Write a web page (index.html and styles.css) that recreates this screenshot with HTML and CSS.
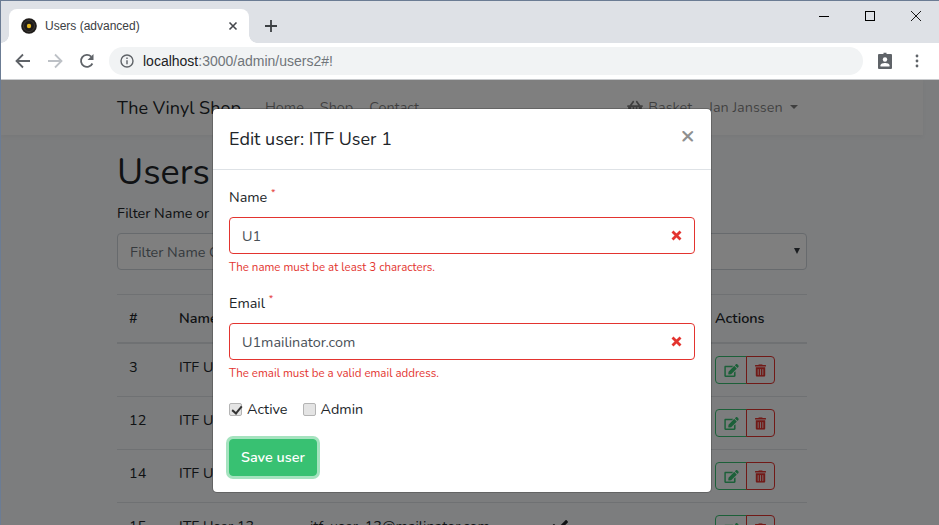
FILE: index.html
```html
<!DOCTYPE html>
<html lang="en">
<head>
    <meta charset="UTF-8">
    <meta name="viewport" content="width=device-width, initial-scale=1.0">
    <title>Users (advanced)</title>
    <link rel="stylesheet" href="styles.css">
</head>
<body>

<div class="tabstrip">
    <div class="tab">
        <svg class="favicon" width="16" height="16" viewBox="0 0 16 16"><circle cx="8" cy="8" r="7.800" fill="#1e1b19"/><circle cx="8" cy="8" r="5.500" fill="none" stroke="#3d3936" stroke-width="1"/><circle cx="8" cy="8" r="2.200" fill="#e3b51c"/></svg>
        <span class="tab-title">Users (advanced)</span>
        <svg class="tab-close" width="10" height="10" viewBox="0 0 10 10"><path d="M1.500 1.500l7 7M8.500 1.500l-7 7" stroke="#45484d" stroke-width="1.600" fill="none"/></svg>
    </div>
    <svg class="new-tab" width="12" height="12" viewBox="0 0 12 12"><path d="M6 0v12M0 6h12" stroke="#3c4043" stroke-width="1.800" fill="none"/></svg>
    <div class="window-controls">
        <svg width="10" height="10" viewBox="0 0 10 10"><path d="M0 5.500h10" stroke="#000" fill="none"/></svg>
        <svg width="10" height="10" viewBox="0 0 10 10"><rect x=".5" y=".5" width="9" height="9" stroke="#000" fill="none"/></svg>
        <svg width="10" height="10" viewBox="0 0 10 10"><path d="M0 0l10 10M10 0L0 10" stroke="#000" stroke-width=".9" fill="none"/></svg>
    </div>
</div>

<div class="toolbar">
    <svg class="tool-icon" width="16" height="16" viewBox="0 0 16 16"><path d="M15 8H2M8 1.500L1.500 8 8 14.500" stroke="#5f6368" stroke-width="1.800" fill="none"/></svg>
    <svg class="tool-icon" width="16" height="16" viewBox="0 0 16 16"><path d="M1 8h13M8 1.500L14.500 8 8 14.500" stroke="#bdc1c6" stroke-width="1.800" fill="none"/></svg>
    <svg class="tool-icon" width="16" height="16" viewBox="0 0 16 16"><path d="M13.400 10.500A6 6 0 1 1 12.200 3.600" stroke="#5f6368" stroke-width="1.800" fill="none"/><path d="M14.500 1v6h-6z" fill="#5f6368"/></svg>
    <div class="omnibox">
        <svg width="14" height="14" viewBox="0 0 14 14"><circle cx="7" cy="7" r="6" stroke="#5f6368" stroke-width="1.400" fill="none"/><path d="M7 6.200v4M7 3.600v1.500" stroke="#5f6368" stroke-width="1.400" fill="none"/></svg>
        <span class="url"><span class="host">localhost</span>:3000/admin/users2#!</span>
    </div>
    <svg class="badge-icon" width="16" height="18" viewBox="0 0 16 18"><path d="M2 2h4.500V.8h3V2H14a1 1 0 0 1 1 1v13a1 1 0 0 1-1 1H2a1 1 0 0 1-1-1V3a1 1 0 0 1 1-1z" fill="#5f6368"/><circle cx="8" cy="7.500" r="2.200" fill="#fff"/><path d="M3.500 14.500v-1.200c0-1.600 3-2.300 4.500-2.300s4.500.7 4.500 2.300v1.200z" fill="#fff"/></svg>
    <svg class="menu-icon" width="4" height="14" viewBox="0 0 4 14"><circle cx="2" cy="2" r="1.400" fill="#5f6368"/><circle cx="2" cy="7" r="1.400" fill="#5f6368"/><circle cx="2" cy="12" r="1.400" fill="#5f6368"/></svg>
</div>

<div class="viewport">
    <div class="page">
        <nav class="navbar">
            <div class="container nav-inner">
                <a class="brand" href="#">The Vinyl Shop</a>
                <a class="nav-link" href="#">Home</a>
                <a class="nav-link" href="#">Shop</a>
                <a class="nav-link" href="#">Contact</a>
                <a class="nav-link basket" href="#">
                    <svg width="16" height="14" viewBox="0 0 576 512"><path fill="currentColor" d="M576 216v16c0 13.255-10.745 24-24 24h-8l-26.113 182.788C514.509 462.435 494.257 480 470.370 480H105.630c-23.887 0-44.139-17.565-47.518-41.212L32 256h-8c-13.255 0-24-10.745-24-24v-16c0-13.255 10.745-24 24-24h67.341l106.780-146.821c10.395-14.292 30.407-17.453 44.701-7.058 14.293 10.395 17.453 30.408 7.058 44.701L170.477 192h235.046L326.120 82.821c-10.395-14.292-7.234-34.306 7.059-44.701 14.291-10.395 34.306-7.235 44.701 7.058L484.659 192H552c13.255 0 24 10.745 24 24zM312 392V280c0-13.255-10.745-24-24-24s-24 10.745-24 24v112c0 13.255 10.745 24 24 24s24-10.745 24-24zm112 0V280c0-13.255-10.745-24-24-24s-24 10.745-24 24v112c0 13.255 10.745 24 24 24s24-10.745 24-24zm-224 0V280c0-13.255-10.745-24-24-24s-24 10.745-24 24v112c0 13.255 10.745 24 24 24s24-10.745 24-24z"/></svg>
                    Basket
                </a>
                <a class="nav-link user" href="#">Jan Janssen <span class="caret"></span></a>
            </div>
        </nav>
        <main class="container">
            <h1>Users</h1>
            <div class="filters">
                <div class="filter-field">
                    <label>Filter Name or Email</label>
                    <input class="control" type="text" placeholder="Filter Name Or Email">
                </div>
                <div class="filter-field">
                    <label>Sort by</label>
                    <div class="control select"><span class="select-arrow"></span></div>
                </div>
            </div>
            <table>
                <thead>
                    <tr><th class="col-id">#</th><th class="col-name">Name</th><th class="col-mail">Email</th><th class="col-active">Active</th><th class="col-admin">Admin</th><th>Actions</th></tr>
                </thead>
                <tbody>
                    <tr><td>3</td><td>ITF User 1</td><td>itf_user_1@mailinator.com</td><td></td><td></td><td><div class="btn-group"><button class="btn-edit"><svg width="15" height="13" viewBox="0 0 576 512"><use href="#icon-edit"/></svg></button><button class="btn-del"><svg width="11" height="13" viewBox="0 0 448 512"><use href="#icon-trash"/></svg></button></div></td></tr>
                    <tr><td>12</td><td>ITF User 10</td><td>itf_user_10@mailinator.com</td><td></td><td></td><td><div class="btn-group"><button class="btn-edit"><svg width="15" height="13" viewBox="0 0 576 512"><use href="#icon-edit"/></svg></button><button class="btn-del"><svg width="11" height="13" viewBox="0 0 448 512"><use href="#icon-trash"/></svg></button></div></td></tr>
                    <tr><td>14</td><td>ITF User 12</td><td>itf_user_12@mailinator.com</td><td></td><td></td><td><div class="btn-group"><button class="btn-edit"><svg width="15" height="13" viewBox="0 0 576 512"><use href="#icon-edit"/></svg></button><button class="btn-del"><svg width="11" height="13" viewBox="0 0 448 512"><use href="#icon-trash"/></svg></button></div></td></tr>
                    <tr><td>15</td><td>ITF User 13</td><td>itf_user_13@mailinator.com</td><td class="check"><svg width="16" height="16" viewBox="0 0 512 512"><path fill="currentColor" d="M173.898 439.404l-166.400-166.400c-9.997-9.997-9.997-26.206 0-36.204l36.203-36.204c9.997-9.998 26.207-9.998 36.204 0L192 312.690 432.095 72.596c9.997-9.997 26.207-9.997 36.204 0l36.203 36.204c9.997 9.997 9.997 26.206 0 36.204l-294.400 294.401c-9.998 9.997-26.207 9.997-36.204-.001z"/></svg></td><td></td><td><div class="btn-group"><button class="btn-edit"><svg width="15" height="13" viewBox="0 0 576 512"><use href="#icon-edit"/></svg></button><button class="btn-del"><svg width="11" height="13" viewBox="0 0 448 512"><use href="#icon-trash"/></svg></button></div></td></tr>
                </tbody>
            </table>
        </main>
    </div>

    <div class="backdrop"></div>

    <div class="modal">
        <div class="modal-header">
            <h5>Edit user: ITF User 1</h5>
            <span class="modal-close">&times;</span>
        </div>
        <form class="modal-body">
            <div class="form-group">
                <label>Name <sup>*</sup></label>
                <div class="invalid-input">
                    <input type="text" value="U1">
                    <svg width="11" height="11" viewBox="0 0 11 11"><path d="M1.500 1.500l8 8M9.500 1.500l-8 8" stroke="#e3342f" stroke-width="2.800" fill="none"/></svg>
                </div>
                <div class="error">The name must be at least 3 characters.</div>
            </div>
            <div class="form-group">
                <label>Email <sup>*</sup></label>
                <div class="invalid-input">
                    <input type="text" value="U1mailinator.com">
                    <svg width="11" height="11" viewBox="0 0 11 11"><path d="M1.500 1.500l8 8M9.500 1.500l-8 8" stroke="#e3342f" stroke-width="2.800" fill="none"/></svg>
                </div>
                <div class="error">The email must be a valid email address.</div>
            </div>
            <div class="checks">
                <label><input type="checkbox" checked> Active</label>
                <label><input type="checkbox"> Admin</label>
            </div>
            <button type="button" class="btn-save">Save user</button>
        </form>
    </div>
</div>

<svg class="icon-defs" width="0" height="0">
    <symbol id="icon-edit" viewBox="0 0 576 512"><path fill="currentColor" d="M402.600 83.200l90.200 90.200c3.800 3.800 3.800 10 0 13.800L274.400 405.600l-92.800 10.300c-12.400 1.400-22.900-9.100-21.500-21.500l10.300-92.800L388.800 83.200c3.800-3.800 10-3.800 13.800 0zm162-22.900l-48.800-48.800c-15.200-15.200-39.900-15.200-55.200 0l-35.400 35.400c-3.800 3.800-3.800 10 0 13.800l90.200 90.200c3.800 3.800 10 3.800 13.800 0l35.400-35.400c15.200-15.300 15.200-40 0-55.200zM384 346.200V448H64V128h229.800c3.200 0 6.200-1.300 8.500-3.500l40-40c7.600-7.600 2.200-20.500-8.500-20.500H48C21.500 64 0 85.500 0 112v352c0 26.500 21.500 48 48 48h352c26.500 0 48-21.500 48-48V306.200c0-10.700-12.900-16-20.500-8.500l-40 40c-2.200 2.300-3.500 5.300-3.500 8.500z"/></symbol>
    <symbol id="icon-trash" viewBox="0 0 448 512"><path fill="currentColor" d="M32 464a48 48 0 0 0 48 48h288a48 48 0 0 0 48-48V128H32zm272-256a16 16 0 0 1 32 0v224a16 16 0 0 1-32 0zm-96 0a16 16 0 0 1 32 0v224a16 16 0 0 1-32 0zm-96 0a16 16 0 0 1 32 0v224a16 16 0 0 1-32 0zM432 32H312l-9.400-18.700A24 24 0 0 0 281.100 0H166.800a23.720 23.720 0 0 0-21.400 13.300L136 32H16A16 16 0 0 0 0 48v32a16 16 0 0 0 16 16h416a16 16 0 0 0 16-16V48a16 16 0 0 0-16-16z"/></symbol>
</svg>

</body>
</html>
```

FILE: styles.css
```css
* {
    box-sizing: border-box;
}
html, body {
    margin: 0;
    height: 100%;
    overflow: hidden;
}
body {
    font-family: "Nunito", Lato, "Open Sans", sans-serif;
    font-size: 14.4px;
    line-height: 1.6;
    color: #212529;
    background: #f8fafc;
    display: flex;
    flex-direction: column;
    border-top: 1px solid #6b7c94;
    border-left: 1px solid #6b7c94;
}
.icon-defs {
    position: absolute;
}

/* browser window */
.tabstrip {
    height: 42px;
    flex: none;
    background: #dee1e6;
    display: flex;
    align-items: flex-end;
    padding-left: 8px;
}
.tab {
    position: relative;
    width: 240px;
    height: 34px;
    background: #fff;
    border-radius: 8px 8px 0 0;
    display: flex;
    align-items: center;
    padding: 0 11px 0 12px;
    font-family: "Liberation Sans", Arial, sans-serif;
    font-size: 12px;
    color: #3c4043;
}
.tab::before, .tab::after {
    content: "";
    position: absolute;
    bottom: 0;
    width: 8px;
    height: 8px;
}
.tab::before {
    left: -8px;
    background: radial-gradient(circle at 0 0, transparent 7.5px, #fff 8px);
}
.tab::after {
    right: -8px;
    background: radial-gradient(circle at 100% 0, transparent 7.5px, #fff 8px);
}
.favicon {
    margin-right: 8px;
}
.tab-title {
    flex: 1;
    padding-top: 2px;
}
.new-tab {
    margin: 0 0 11px 16px;
}
.window-controls {
    margin-left: auto;
    align-self: flex-start;
    display: flex;
    gap: 36px;
    padding: 10px 18px 0 0;
}
.toolbar {
    height: 37px;
    flex: none;
    background: #fff;
    border-bottom: 1px solid #c8cacd;
    display: flex;
    align-items: center;
    padding: 0 14px 0 14px;
}
.tool-icon {
    margin-right: 16px;
}
.tool-icon:nth-child(3) {
    margin-right: 14px;
}
.omnibox {
    width: 754px;
    height: 28px;
    background: #f1f3f4;
    border-radius: 14px;
    display: flex;
    align-items: center;
    padding-left: 11px;
    font-family: "Liberation Sans", Arial, sans-serif;
    font-size: 14px;
    color: #70757a;
}
.url {
    margin-left: 9px;
}
.host {
    color: #202124;
}
.badge-icon {
    margin-left: 14px;
}
.menu-icon {
    margin-left: 22px;
}

/* page under the modal */
.viewport {
    flex: 1;
    position: relative;
    overflow: hidden;
}
.page {
    width: 922px;
}
.container {
    width: 720px;
    margin: 0 auto;
    padding: 0 15px;
    display: block;
}
.navbar {
    height: 55px;
    background: #fff;
    box-shadow: 0 2px 4px rgba(0, 0, 0, .04);
}
.nav-inner {
    height: 100%;
    display: flex;
    align-items: center;
}
.brand {
    font-size: 18px;
    color: #212529;
    text-decoration: none;
    margin-right: 24px;
    padding-top: 2px;
}
.nav-link {
    color: rgba(0, 0, 0, .5);
    text-decoration: none;
    margin-right: 16px;
}
.basket {
    margin-left: auto;
    display: flex;
    align-items: center;
    gap: 5px;
}
.user {
    margin-right: 9px;
}
.caret {
    display: inline-block;
    margin-left: 3.7px;
    vertical-align: 3px;
    border-top: 4.5px solid;
    border-left: 4.5px solid transparent;
    border-right: 4.5px solid transparent;
}
h1 {
    font-size: 36px;
    font-weight: 400;
    line-height: 43px;
    margin: 16px 0 8px;
}
label {
    display: block;
}
.filters {
    display: flex;
    gap: 30px;
    margin-bottom: 24px;
}
.filter-field {
    flex: 1;
}
.filter-field label {
    margin-bottom: 8px;
}
.control {
    width: 100%;
    height: 37px;
    border: 1px solid #ced4da;
    border-radius: 4px;
    padding: 0 12px;
    font: inherit;
    background: #fff;
}
.control::placeholder {
    color: #6c757d;
}
.select {
    position: relative;
}
.select-arrow {
    position: absolute;
    right: 6px;
    top: 14px;
    border-top: 6px solid #343a40;
    border-left: 3px solid transparent;
    border-right: 3px solid transparent;
}
table {
    width: 100%;
    border-collapse: separate;
    border-spacing: 0;
}
th, td {
    text-align: left;
    vertical-align: top;
    padding: 12px;
    border-top: 1px solid #dee2e6;
}
th {
    border-bottom: 1px solid #dee2e6;
    font-weight: 600;
}
td {
    height: 53px;
}
.col-id {
    width: 50px;
}
.col-name {
    width: 131px;
}
.col-mail {
    width: 235px;
}
.col-active {
    width: 80px;
}
.col-admin {
    width: 90px;
}
.check {
    padding: 15px 12px 0 19px;
}
.btn-group {
    display: flex;
}
.btn-group button {
    height: 28px;
    background: transparent;
    padding: 0;
    display: flex;
    align-items: center;
    justify-content: center;
}
.btn-edit {
    width: 32px;
    border: 1px solid #38c172;
    border-radius: 4px 0 0 4px;
    color: #38c172;
}
.btn-del {
    width: 29px;
    border: 1px solid #e3342f;
    border-radius: 0 4px 4px 0;
    margin-left: -1px;
    color: #e3342f;
}

/* modal */
.backdrop {
    position: absolute;
    inset: 0;
    background: rgba(0, 0, 0, .5);
}
.modal {
    position: absolute;
    left: 211px;
    top: 28px;
    width: 500px;
    background: #fff;
    border: 1px solid rgba(0, 0, 0, .2);
    border-radius: 5px;
    background-clip: padding-box;
}
.modal-header {
    height: 61px;
    border-bottom: 1px solid #dee2e6;
    display: flex;
    align-items: center;
    justify-content: space-between;
    padding: 0 16px;
}
.modal-header h5 {
    margin: 0;
    font-size: 18px;
    font-weight: 400;
}
.modal-close {
    font-size: 24px;
    font-weight: 700;
    color: #8f8f8f;
    line-height: 1;
    margin: -9px 0 0 0;
}
.modal-body {
    padding: 16px;
}
.form-group {
    margin-bottom: 15.5px;
}
.form-group label {
    margin-bottom: 8px;
}
sup {
    color: #e3342f;
    font-size: 10px;
    line-height: 0;
}
.invalid-input {
    position: relative;
}
.invalid-input input {
    width: 100%;
    height: 37px;
    border: 1px solid #e3342f;
    border-radius: 4px;
    padding: 0 12px;
    font: inherit;
    color: #495057;
    outline: none;
}
.invalid-input svg {
    position: absolute;
    right: 13px;
    top: 13px;
}
.error {
    color: #e3342f;
    font-size: 11.52px;
    margin-top: 4px;
}
.checks {
    display: flex;
    gap: 15px;
    margin-bottom: 18px;
}
.checks label {
    display: flex;
    align-items: center;
    gap: 5px;
}
.checks input {
    appearance: none;
    position: relative;
    margin: 0;
    width: 13px;
    height: 13px;
    background: #e4e4e4;
    border: 1px solid #b4b4b4;
    border-radius: 2px;
}
.checks input:checked::after {
    content: "";
    position: absolute;
    left: 3.5px;
    top: 0;
    width: 4px;
    height: 8px;
    border: solid #333;
    border-width: 0 2px 2px 0;
    transform: rotate(40deg);
}
.btn-save {
    height: 37px;
    padding: 0 11px;
    background: #38c172;
    color: #fff;
    border: 1px solid #38c172;
    border-radius: 4px;
    box-shadow: 0 0 0 3px rgba(56, 193, 114, .45);
    font: inherit;
    font-weight: 600;
}
```
